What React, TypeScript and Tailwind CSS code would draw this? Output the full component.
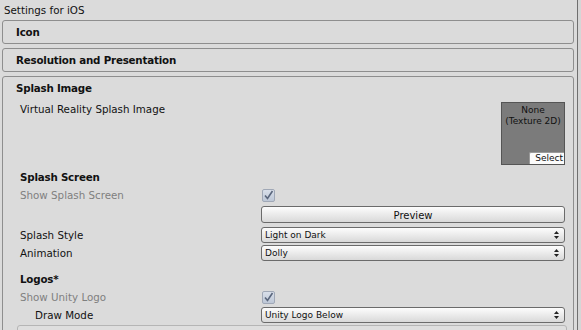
import React from "react";

function Arrows() {
  return (
    <svg width="5" height="8" viewBox="0 0 5 8" className="shrink-0">
      <path d="M2.5 0 L5 3 L0 3 Z" fill="#222" />
      <path d="M0 5 L5 5 L2.5 8 Z" fill="#222" />
    </svg>
  );
}

function Dropdown({ text }: { text: string }) {
  return (
    <div className="h-[16px] rounded-[3px] border border-[#6b6b6b] bg-linear-to-b from-[#fdfdfd] to-[#d9d9d9] flex items-center justify-between pl-[3px] pr-[5px] text-[9px] text-[#111]">
      <span className="pt-[1px]">{text}</span>
      <Arrows />
    </div>
  );
}

function Check() {
  return (
    <svg width="13" height="13" viewBox="0 0 13 13" className="ml-[1px]">
      <defs>
        <linearGradient id="cb" x1="0" y1="0" x2="0" y2="1">
          <stop offset="0" stopColor="#dae0ea" />
          <stop offset="1" stopColor="#bcc6d6" />
        </linearGradient>
      </defs>
      <rect x="0.5" y="0.5" width="12" height="12" rx="1.5" fill="url(#cb)" stroke="#a0a8b6" />
      <path d="M3 6.5 L5.5 9.5 L10.5 2" fill="none" stroke="#5a667c" strokeWidth="1.6" />
    </svg>
  );
}

const boldCls = "font-bold text-[10.3px] tracking-[-0.2px]";

function Row({
  label,
  children,
  gray,
  bold,
  indent,
  h = "h-[16px]",
  mt,
}: {
  label?: string;
  children?: React.ReactNode;
  gray?: boolean;
  bold?: boolean;
  indent?: boolean;
  h?: string;
  mt: string;
}) {
  return (
    <div className={`flex items-center ${h} ${mt}`}>
      <div
        className={`w-[241px] shrink-0 pt-[1px] ${gray ? "text-[#7f7f7f]" : "text-[#111]"} ${
          bold ? boldCls : ""
        } ${indent ? "pl-[15px]" : ""}`}
      >
        {label}
      </div>
      <div className="flex-1 flex items-center h-full">{children}</div>
    </div>
  );
}

export default function App() {
  return (
    <div className="w-[581px] h-[330px] overflow-hidden bg-[#dbdbdb] flex text-[10.3px] text-[#111] font-['DejaVu_Sans',sans-serif]">
      <div className="w-[577px] shrink-0 pl-[2px] pr-[3px]">
        <div className="h-[20px] pl-[2px] pt-[1px] flex items-center">Settings for iOS</div>
        <div className={`h-[24px] border border-[#8e8e8e] rounded-[3px] flex items-center pl-[13px] pt-[1px] ${boldCls}`}>
          Icon
        </div>
        <div className={`mt-[4px] h-[24px] border border-[#8e8e8e] rounded-[3px] flex items-center pl-[13px] pt-[1px] ${boldCls}`}>
          Resolution and Presentation
        </div>
        <div className="mt-[4px] h-[300px] border border-[#8e8e8e] rounded-[3px]">
          <div className={`h-[22px] flex items-center pl-[13px] pt-[1px] ${boldCls}`}>
            Splash Image
          </div>
          <div className="pl-[17px] pr-[8px]">
            <div className="mt-[2px] flex justify-between items-start">
              <div className="h-[16px] pt-[1px] flex items-center">Virtual Reality Splash Image</div>
              <div className="relative mt-[1px] w-[64px] h-[63px] border border-[#555] bg-[#7b7b7b] text-center text-[9px] leading-[11px] pt-[2px] text-[#111]">
                <div>None</div>
                <div>(Texture 2D)</div>
                <div className="absolute right-0 bottom-0 w-[35px] h-[12px] bg-[#fbfbfb] border-l border-t border-[#9a9a9a] rounded-tl-[2px] text-right pr-[1px] text-[9px] leading-[11px]">
                  Select
                </div>
              </div>
            </div>
            <Row mt="mt-[4px]" label="Splash Screen" bold />
            <Row mt="mt-[2px]" label="Show Splash Screen" gray>
              <Check />
            </Row>
            <Row mt="mt-[3px]" h="h-[17px]">
              <div className="w-full h-[17px] rounded-[3px] border border-[#6b6b6b] bg-linear-to-b from-[#fdfdfd] to-[#d9d9d9] flex items-center justify-center pt-[1px] text-[10px]">
                Preview
              </div>
            </Row>
            <Row mt="mt-[4px]" label="Splash Style">
              <div className="w-full">
                <Dropdown text="Light on Dark" />
              </div>
            </Row>
            <Row mt="mt-[2px]" label="Animation">
              <div className="w-full">
                <Dropdown text="Dolly" />
              </div>
            </Row>
            <Row mt="mt-[10px]" label="Logos*" bold />
            <Row mt="mt-[2px]" label="Show Unity Logo" gray>
              <Check />
            </Row>
            <Row mt="mt-[2px]" label="Draw Mode" indent>
              <div className="w-full">
                <Dropdown text="Unity Logo Below" />
              </div>
            </Row>
            <div className="mt-[2px] ml-[-3px] mr-[-2px] h-[40px] border border-[#b5b5b5] rounded-[3px] bg-[#dedede]" />
          </div>
        </div>
      </div>
      <div className="w-[1px] bg-[#6f6f6f]" />
      <div className="flex-1 bg-[#d6d6d6]" />
    </div>
  );
}
